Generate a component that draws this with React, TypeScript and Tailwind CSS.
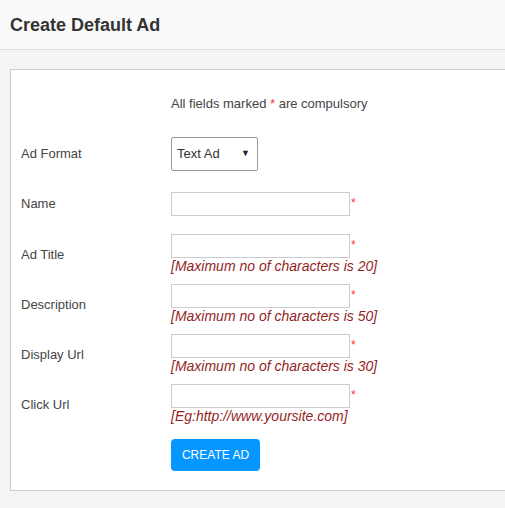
import { ReactNode } from 'react';

const FIELDS = [
  { label: 'Name', hint: '' },
  { label: 'Ad Title', hint: '[Maximum no of characters is 20]' },
  { label: 'Description', hint: '[Maximum no of characters is 50]' },
  { label: 'Display Url', hint: '[Maximum no of characters is 30]' },
  { label: 'Click Url', hint: '[Eg:http://www.yoursite.com]' },
];

function Row({ label, children, className = '' }: { label: string; children: ReactNode; className?: string }) {
  return (
    <div className={`flex items-center ${className}`}>
      <div className="w-[150px] text-[13px] leading-[16px] text-[#444]">{label}</div>
      <div>{children}</div>
    </div>
  );
}

export default function App() {
  return (
    <div className="min-h-screen w-[505px] bg-[#f4f4f4] overflow-hidden font-['Liberation_Sans',Arial,sans-serif]">
      <header className="h-[50px] bg-[#f9f9f9] border-b border-[#ddd] px-[10px] flex items-center">
        <h1 className="text-[18px] font-bold text-[#333] leading-none">Create Default Ad</h1>
      </header>

      <main className="pt-[19px] pl-[10px] mr-[-40px]">
        <section className="bg-white border border-[#ccc] pl-[10px] pt-[26px] pb-[19px]">
          <p className="pl-[150px] text-[13px] leading-[16px] text-[#444]">
            All fields marked <span className="text-[#f33]">*</span> are compulsory
          </p>

          <Row label="Ad Format" className="mt-[25px]">
            <div className="h-[34px] w-[87px] border border-[#999] rounded-[2px] flex items-center justify-between pl-[5px] pr-[7px] text-[13px] text-[#333]">
              <span>Text Ad</span>
              <span className="text-[9px] text-[#222]">▼</span>
            </div>
          </Row>

          {FIELDS.map((f, i) => (
            <Row key={f.label} label={f.label} className={i === 0 ? 'mt-[21px]' : i === 1 ? 'mt-[18px]' : 'mt-[9px]'}>
              <div className="flex items-start">
                <input type="text" className="h-[24px] w-[179px] border border-[#ccc] outline-none" />
                <span className="text-[12px] leading-none text-[#f33] mt-[5px] ml-[1px]">*</span>
              </div>
              {f.hint && (
                <div className="text-[14px] leading-[17px] italic text-[#931f1f]">{f.hint}</div>
              )}
            </Row>
          ))}

          <div className="pl-[150px] mt-[14px]">
            <button className="h-[32px] w-[89px] rounded-[4px] bg-[#0596ff] text-white text-[12px] uppercase">
              Create Ad
            </button>
          </div>
        </section>
      </main>
    </div>
  );
}
